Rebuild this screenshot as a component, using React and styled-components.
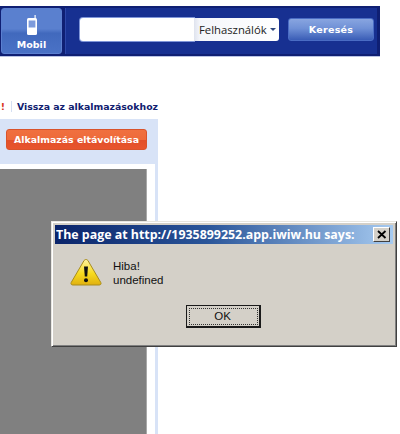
import styled, { createGlobalStyle } from 'styled-components';

const GlobalStyle = createGlobalStyle`
  html, body {
    margin: 0;
    padding: 0;
    background: #fff;
  }
  body {
    width: 400px;
    height: 434px;
    overflow: hidden;
    font-family: "Liberation Sans", Arial, sans-serif;
  }
`;

const Page = styled.div`
  position: relative;
  width: 400px;
  height: 434px;
  overflow: hidden;
  padding-top: 6px;
  box-sizing: border-box;
`;

const Header = styled.div`
  display: flex;
  gap: 3px;
  width: 380px;
  height: 50px;
  padding: 2px 0 2px 1px;
  box-sizing: border-box;
  background: #0f1f73;
  box-shadow: 0 1px 0 #b9c3e4;
`;

const MobileButton = styled.div`
  width: 61px;
  display: flex;
  flex-direction: column;
  align-items: center;
  padding-top: 6px;
  box-sizing: border-box;
  border-radius: 3px;
  border: 1px solid #5b7fd0;
  background: linear-gradient(#5a80cf 0%, #5a80cf 45%, #4169bd 55%, #4a72c6 100%);
  color: #fff;
  font-family: "DejaVu Sans", Verdana, sans-serif;
  font-size: 9.5px;
  font-weight: bold;
`;

const PhoneIcon = styled.svg`
  width: 12px;
  height: 21px;
  margin-bottom: 3px;
`;

const SearchBar = styled.div`
  flex: 1;
  display: flex;
  align-items: flex-start;
  padding: 10px 0 0 14px;
  margin-right: 3px;
  box-sizing: border-box;
  background: #173091;
  border-left: 1px solid #2c46a8;
`;

const SearchInput = styled.div`
  width: 114px;
  height: 23px;
  background: #fff;
  border-radius: 3px 0 0 3px;
  box-shadow: 0 0 0 1px #7f95d8;
`;

const ScopeSelect = styled.div`
  width: 85px;
  height: 23px;
  display: flex;
  align-items: center;
  gap: 3px;
  padding-left: 5px;
  box-sizing: border-box;
  background: linear-gradient(90deg, #dfe3ee 0, #f4f6fb 6px, #fff 100%);
  border-radius: 0 3px 3px 0;
  color: #222;
  font-size: 11.3px;
  font-family: "Open Sans", "Liberation Sans", sans-serif;
  white-space: nowrap;
`;

const Caret = styled.span`
  width: 0;
  height: 0;
  border-left: 3px solid transparent;
  border-right: 3px solid transparent;
  border-top: 3px solid #30487f;
`;

const SearchButton = styled.div`
  width: 86px;
  height: 23px;
  margin-left: 9px;
  display: flex;
  align-items: center;
  justify-content: center;
  border-radius: 3px;
  border: 1px solid #4a6cc4;
  box-sizing: border-box;
  background: linear-gradient(#88a5e0 0%, #6f90d6 45%, #3a5db6 100%);
  color: #fff;
  font-family: "DejaVu Sans", Verdana, sans-serif;
  font-size: 9.5px;
  font-weight: bold;
  letter-spacing: 0.3px;
`;

const LinkRow = styled.div`
  display: flex;
  align-items: center;
  justify-content: flex-end;
  width: 158px;
  height: 14px;
  margin-top: 43px;
  font-family: "DejaVu Sans", Verdana, sans-serif;
  font-size: 9.35px;
  font-weight: bold;
  white-space: nowrap;
`;

const WarnMark = styled.span`
  color: #d8351c;
  margin-right: 6px;
`;

const BackLink = styled.span`
  color: #10206f;
  border-left: 1px solid #d5dff2;
  padding-left: 5px;
`;

const Panel = styled.div`
  width: 158px;
  height: 315px;
  margin-top: 6px;
  box-sizing: border-box;
  background: #d8e3f7;
  display: flex;
  flex-direction: column;
`;

const RemoveRow = styled.div`
  height: 45px;
  flex-shrink: 0;
  display: flex;
  justify-content: flex-end;
  padding: 10px 11px 0 0;
  box-sizing: border-box;
`;

const RemoveButton = styled.div`
  width: 141px;
  height: 21px;
  display: flex;
  align-items: center;
  justify-content: center;
  box-sizing: border-box;
  border-radius: 3px;
  border: 1px solid #d9532b;
  background: linear-gradient(#f0703f 0%, #ee6a3a 50%, #e2502a 55%, #e8552d 100%);
  color: #fff;
  font-family: "DejaVu Sans", Verdana, sans-serif;
  font-size: 9.4px;
  font-weight: bold;
  white-space: nowrap;
`;

const ContentFrame = styled.div`
  flex: 1;
  margin-right: 3px;
  padding: 5px 8px 0 0;
  background: #fff;
`;

const GrayContent = styled.div`
  height: 100%;
  background: #808080;
  border-right: 1px solid #a8a8a8;
`;

const Dialog = styled.div`
  position: absolute;
  left: 51px;
  top: 221px;
  width: 346px;
  height: 126px;
  box-sizing: border-box;
  padding: 3px;
  background: #d4d0c8;
  border: 1px solid;
  border-color: #e8e6e0 #404040 #404040 #e8e6e0;
  box-shadow: inset 1px 1px 0 #fff, inset -1px -1px 0 #808080;
  display: flex;
  flex-direction: column;
`;

const TitleBar = styled.div`
  height: 19px;
  flex-shrink: 0;
  display: flex;
  align-items: center;
  justify-content: space-between;
  padding: 0 3px 0 1px;
  background: linear-gradient(90deg, #0a246a 0%, #2a5599 45%, #a6caf0 100%);
  color: #fff;
  font-size: 12.4px;
  font-weight: bold;
  font-family: "Open Sans", "Liberation Sans", sans-serif;
  white-space: nowrap;
`;

const CloseButton = styled.div`
  width: 17px;
  height: 15px;
  display: flex;
  align-items: center;
  justify-content: center;
  background: #d4d0c8;
  border: 1px solid;
  border-color: #fff #404040 #404040 #fff;
  box-sizing: border-box;
`;

const DialogBody = styled.div`
  display: flex;
  gap: 11px;
  padding: 14px 0 0 15px;
  height: 58px;
  flex-shrink: 0;
  box-sizing: border-box;
`;

const Message = styled.div`
  padding-top: 1px;
  font-size: 11.5px;
  line-height: 14px;
  color: #111;
`;

const ButtonRow = styled.div`
  display: flex;
  justify-content: center;
  padding: 3px 2px 0 0;
`;

const OkButton = styled.div`
  width: 75px;
  height: 23px;
  display: flex;
  align-items: center;
  justify-content: center;
  box-sizing: border-box;
  background: #d4d0c8;
  border: 1px solid #1a1a1a;
  border-right-width: 2px;
  border-bottom-width: 2px;
  outline: 1px dotted #333;
  outline-offset: -4px;
  font-size: 11.5px;
  color: #111;
`;

export default function App() {
  return (
    <Page>
      <GlobalStyle />
      <Header>
        <MobileButton>
          <PhoneIcon viewBox="0 0 12 21">
            <path d="M8.5 0h1.2v4H8.5z" fill="#fff" />
            <rect x="1" y="3" width="10" height="17" rx="1.5" fill="#fff" />
            <rect x="2.6" y="5.5" width="6.8" height="7" fill="#7d9bdc" />
          </PhoneIcon>
          Mobil
        </MobileButton>
        <SearchBar>
          <SearchInput />
          <ScopeSelect>
            Felhasználók
            <Caret />
          </ScopeSelect>
          <SearchButton>Keresés</SearchButton>
        </SearchBar>
      </Header>
      <LinkRow>
        <WarnMark>!</WarnMark>
        <BackLink>Vissza az alkalmazásokhoz</BackLink>
      </LinkRow>
      <Panel>
        <RemoveRow>
          <RemoveButton>Alkalmazás eltávolítása</RemoveButton>
        </RemoveRow>
        <ContentFrame>
          <GrayContent />
        </ContentFrame>
      </Panel>
      <Dialog>
        <TitleBar>
          The page at http://1935899252.app.iwiw.hu says:
          <CloseButton>
            <svg width="10" height="9" viewBox="0 0 10 9">
              <path d="M1 1l7.5 7M8.5 1L1 8" stroke="#000" strokeWidth="1.8" />
            </svg>
          </CloseButton>
        </TitleBar>
        <DialogBody>
          <svg width="32" height="28" viewBox="0 0 32 28">
            <defs>
              <linearGradient id="warnFill" x1="0" y1="0" x2="0" y2="1">
                <stop offset="0" stopColor="#fff3a0" />
                <stop offset="0.55" stopColor="#f7da1e" />
                <stop offset="1" stopColor="#e0b010" />
              </linearGradient>
            </defs>
            <path d="M16 1.5c1 0 1.7.6 2.2 1.5l12.6 21.5c.7 1.4-.1 2.5-1.7 2.5H2.9c-1.6 0-2.4-1.1-1.7-2.5L13.8 3c.5-.9 1.2-1.5 2.2-1.5z" fill="url(#warnFill)" stroke="#a88c1c" strokeWidth="1" />
            <path d="M14 8.5h4l-.8 10h-2.4z" fill="#111" />
            <circle cx="16" cy="22.2" r="2" fill="#111" />
          </svg>
          <Message>
            Hiba!
            <br />
            undefined
          </Message>
        </DialogBody>
        <ButtonRow>
          <OkButton>OK</OkButton>
        </ButtonRow>
      </Dialog>
    </Page>
  );
}
